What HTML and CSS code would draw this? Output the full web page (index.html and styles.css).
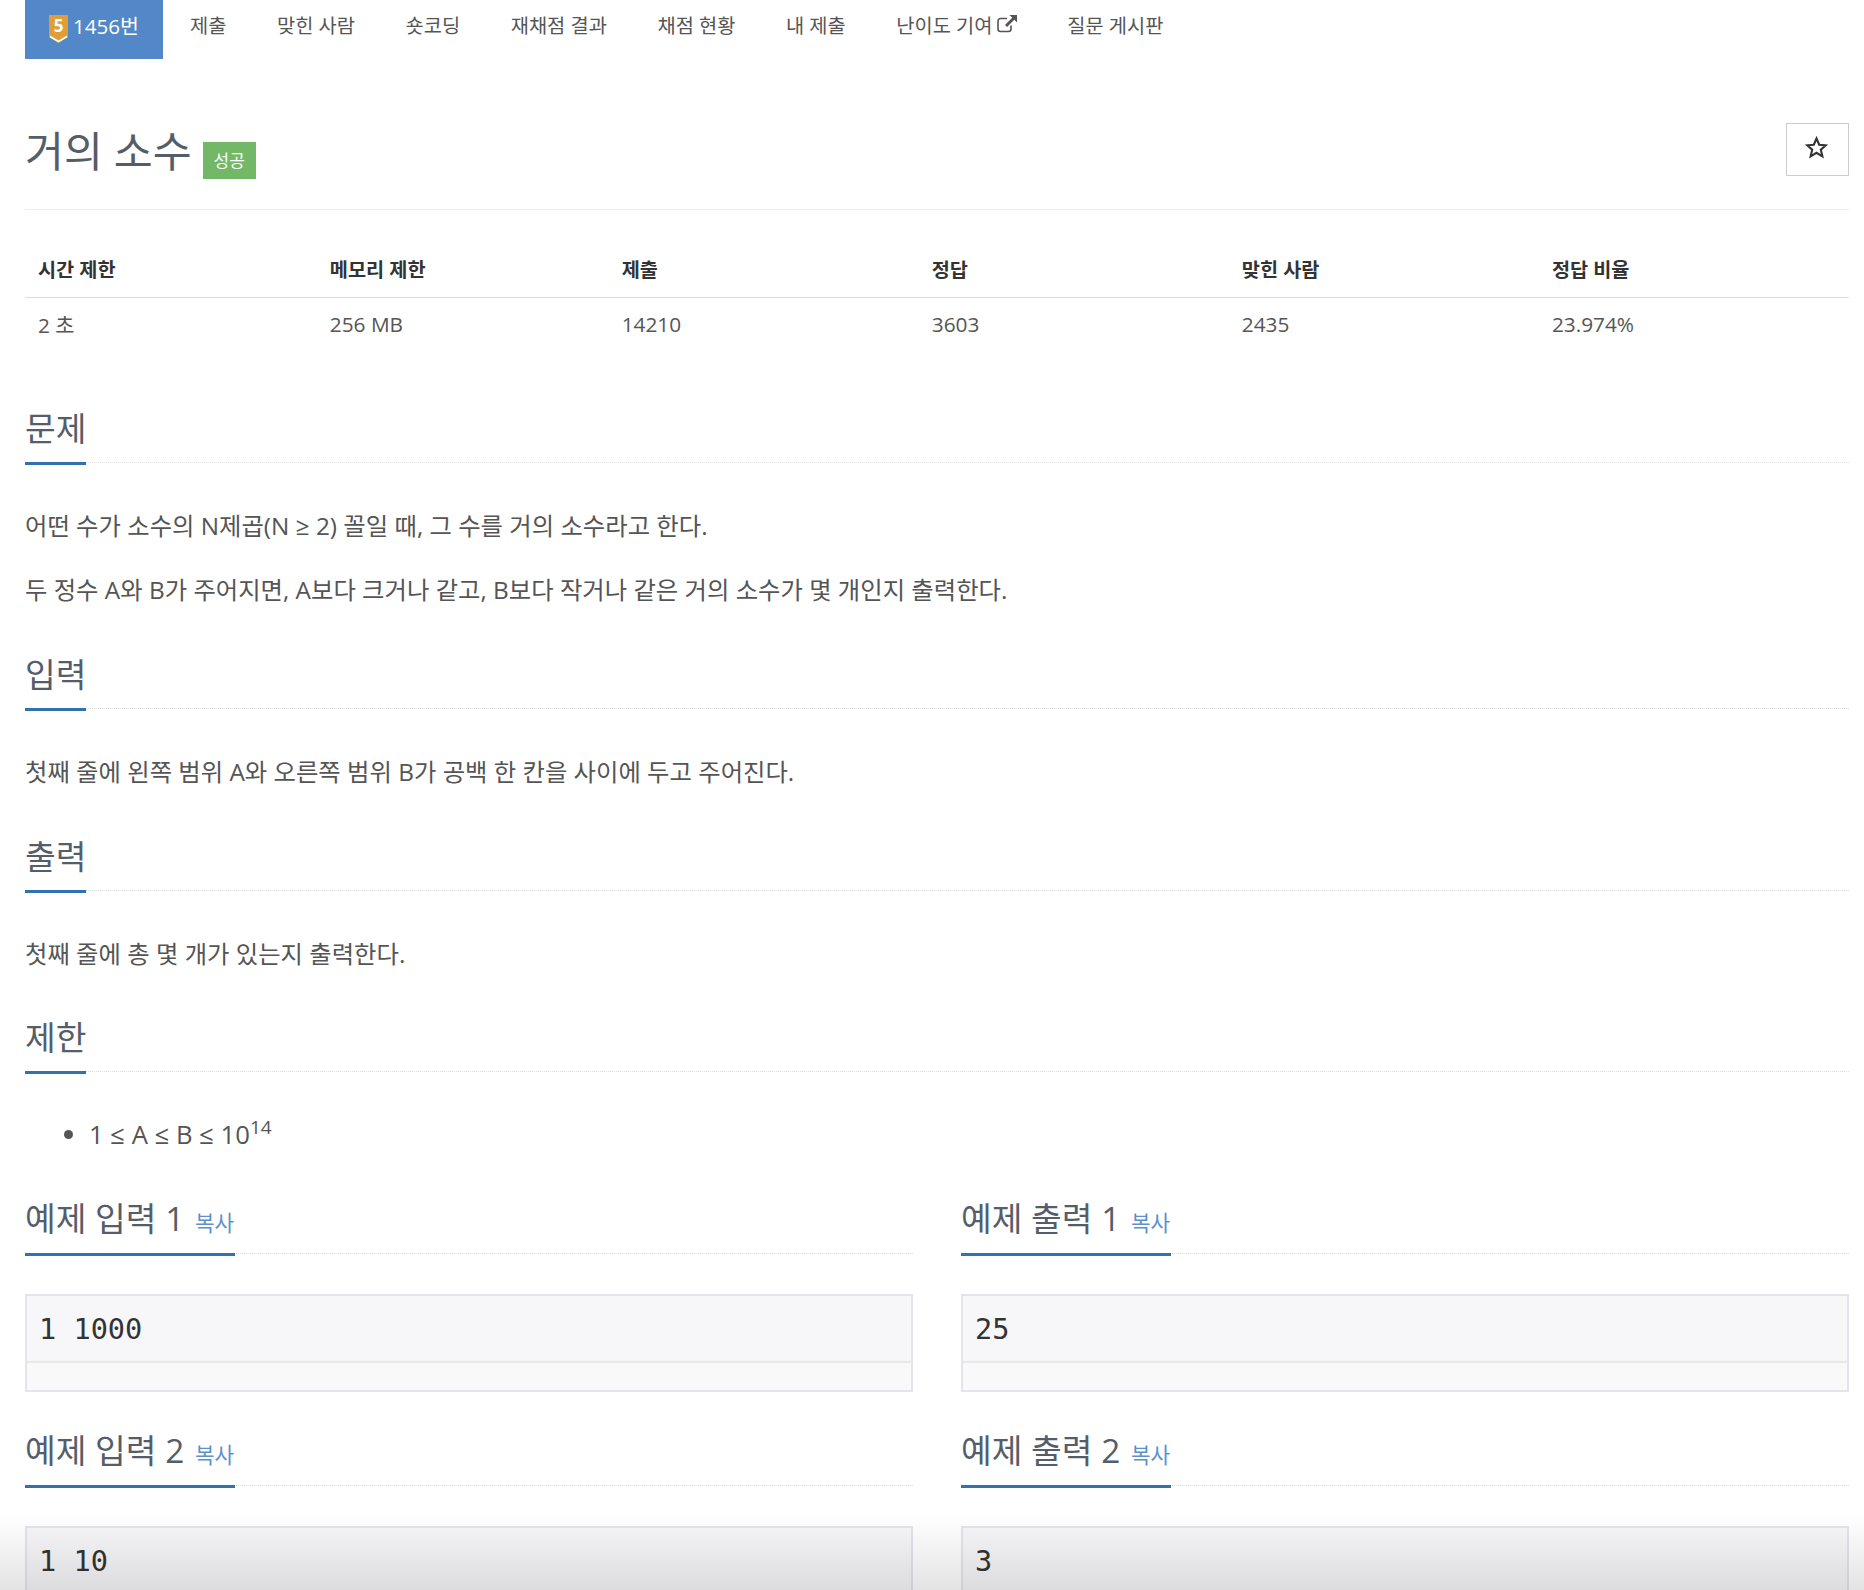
FILE: index.html
```html
<!DOCTYPE html>
<html lang="ko">
<head>
<meta charset="utf-8">
<title>거의 소수</title>
<link rel="stylesheet" href="styles.css">
</head>
<body>
<div class="page">
  <nav class="tabs">
    <a class="tab active"><svg class="tier" viewBox="0 0 19 28"><path d="M0 0H19V22L9.5 28L0 22Z" fill="#e09e37"/><path d="M1 21.5L9.5 26.5L18 21.5" fill="none" stroke="#fff" stroke-width="1.6"/><text x="9.5" y="17" text-anchor="middle" class="tier-num">5</text></svg>1456번</a>
    <a class="tab">제출</a>
    <a class="tab">맞힌 사람</a>
    <a class="tab">숏코딩</a>
    <a class="tab">재채점 결과</a>
    <a class="tab">채점 현황</a>
    <a class="tab">내 제출</a>
    <a class="tab">난이도 기여 <svg class="ext" viewBox="0 0 20 18"><path d="M14 10.5V14a2.5 2.5 0 0 1-2.500 2.500H3.500A2.500 2.500 0 0 1 1 14V6a2.500 2.500 0 0 1 2.500-2.500H10" fill="none" stroke="currentColor" stroke-width="1.600"/><path d="M12.500 0H20V7.500L17.300 4.800L10 12L8 10L15.200 2.700Z" fill="currentColor"/></svg></a>
    <a class="tab">질문 게시판</a>
  </nav>

  <header class="title-row">
    <h1 class="title">거의 소수 <span class="label">성공</span></h1>
    <button class="star-btn"><svg viewBox="0 0 24 24" class="star"><path d="M12 2.600L14.800 9.100L21.800 9.700L16.500 14.300L18.100 21.200L12 17.500L5.900 21.200L7.500 14.300L2.200 9.700L9.200 9.100Z" fill="none" stroke="#333" stroke-width="2.200"/></svg></button>
  </header>

  <table class="info">
    <thead>
      <tr><th class="w16">시간 제한</th><th class="w16">메모리 제한</th><th class="w17">제출</th><th class="w17">정답</th><th class="w17">맞힌 사람</th><th class="w17">정답 비율</th></tr>
    </thead>
    <tbody>
      <tr><td>2 초</td><td>256 MB</td><td>14210</td><td>3603</td><td>2435</td><td>23.974%</td></tr>
    </tbody>
  </table>

  <section class="sec first">
    <h2 class="head"><span>문제</span></h2>
    <p>어떤 수가 소수의 N제곱(N ≥ 2) 꼴일 때, 그 수를 거의 소수라고 한다.</p>
    <p>두 정수 A와 B가 주어지면, A보다 크거나 같고, B보다 작거나 같은 거의 소수가 몇 개인지 출력한다.</p>
  </section>
  <section class="sec">
    <h2 class="head"><span>입력</span></h2>
    <p>첫째 줄에 왼쪽 범위 A와 오른쪽 범위 B가 공백 한 칸을 사이에 두고 주어진다.</p>
  </section>
  <section class="sec">
    <h2 class="head"><span>출력</span></h2>
    <p>첫째 줄에 총 몇 개가 있는지 출력한다.</p>
  </section>
  <section class="sec">
    <h2 class="head"><span>제한</span></h2>
    <ul><li>1 ≤ A ≤ B ≤ 10<sup>14</sup></li></ul>
  </section>

  <div class="samples">
    <div class="sample">
      <h2 class="head"><span>예제 입력 1 <a class="copy">복사</a></span></h2>
      <div class="box"><pre>1 1000</pre><div class="band"></div></div>
    </div>
    <div class="sample">
      <h2 class="head"><span>예제 출력 1 <a class="copy">복사</a></span></h2>
      <div class="box"><pre>25</pre><div class="band"></div></div>
    </div>
    <div class="sample">
      <h2 class="head"><span>예제 입력 2 <a class="copy">복사</a></span></h2>
      <div class="box"><pre>1 10</pre><div class="band"></div></div>
    </div>
    <div class="sample">
      <h2 class="head"><span>예제 출력 2 <a class="copy">복사</a></span></h2>
      <div class="box"><pre>3</pre><div class="band"></div></div>
    </div>
  </div>
  <div class="fade"></div>
</div>
</body>
</html>
```
FILE: styles.css
```css
html, body { margin: 0; padding: 0; background: #fff; }
body { font-family: "Open Sans", "Noto Sans CJK KR", sans-serif; color: #555; }
.page { position: relative; width: 1864px; height: 1590px; overflow: hidden; padding: 0 15px 0 25px; box-sizing: border-box; }

.tabs { display: flex; height: 59px; font-size: 19.800px; color: #555; }
.tab { padding: 9px 25.300px 0; line-height: 34px; white-space: nowrap; }
.tab.active { width: 138px; box-sizing: border-box; margin-right: 1.700px; padding-left: 24px; padding-right: 0; background: #5288c7; color: #fff; font-size: 20.500px; }
.tier { width: 19px; height: 28px; vertical-align: -9px; margin-right: 5px; }
.tier-num { font: 700 17px "Open Sans", sans-serif; fill: #fff; }
.ext { width: 20px; height: 18px; vertical-align: 0; margin-left: -1px; }

.title-row { display: flex; justify-content: space-between; align-items: flex-start; height: 151px; box-sizing: border-box; border-bottom: 1px solid #eee; }
.title { margin: 64px 0 0; font-size: 42.300px; font-weight: 400; line-height: 56px; color: #555d69; }
.label { display: inline-block; background: #72b866; color: #fff; font-size: 17px; line-height: 37px; width: 53px; text-align: center; vertical-align: 0; }
.star-btn { margin-top: 64px; width: 63px; height: 53px; background: #fff; border: 1px solid #ccc; padding: 0; display: flex; align-items: center; justify-content: center; }
.star { width: 23px; height: 23px; margin-top: -5px; margin-left: -2px; }

.info { width: 100%; border-collapse: collapse; table-layout: fixed; margin-top: 39px; font-size: 20.800px; color: #555; }
.w16 { width: 16%; }
.w17 { width: 17%; }
.info th { text-align: left; font-weight: 700; color: #333; font-size: 19.700px; height: 48px; padding: 0 13px 9px; border-bottom: 1px solid #ddd; box-sizing: border-box; }
.info td { padding: 0 13px 3px; height: 56px; box-sizing: border-box; }

.head { margin: 0; font-size: 33.400px; font-weight: 400; line-height: 50px; color: #555d69; border-bottom: 1px dotted #ddd; height: 59px; }
.head span { display: inline-block; height: 59px; border-bottom: 3px solid #3071b0; white-space: nowrap; }
.sec { margin-top: 39.800px; }
.sec.first { margin-top: 50px; }
.sec p { margin: 0 0 26px; font-size: 24.350px; line-height: 38px; }
.head + p { margin-top: 44px; }
.sec ul { margin: 44px 0 0; padding: 0 0 0 64px; font-size: 25.700px; line-height: 38px; }
sup { font-size: 19px; line-height: 0; }

.samples { display: grid; grid-template-columns: 888px 888px; column-gap: 48px; row-gap: 33px; margin-top: 39px; }
.sample .head, .sample .head span { height: 60px; }
.sample .head span { padding-right: 1px; }
.copy { font-size: 21.300px; color: #5a90cc; margin-left: 2px; }
.box { margin-top: 40px; border: 2px solid #e4e4ea; background: #f9f9f9; height: 98px; box-sizing: border-box; overflow: hidden; }
.box pre { margin: 0; height: 67px; box-sizing: border-box; padding: 0 12px; background: #f7f7f9; border-bottom: 2px solid #e8e8ea; font: 28.600px/66px "DejaVu Sans Mono", monospace; color: #333; }
.band { height: 25px; }

.fade { position: absolute; left: 0; right: 0; bottom: 0; height: 75px; background: linear-gradient(to bottom, rgba(0,0,0,0), rgba(0,0,0,0.11)); pointer-events: none; }
```
